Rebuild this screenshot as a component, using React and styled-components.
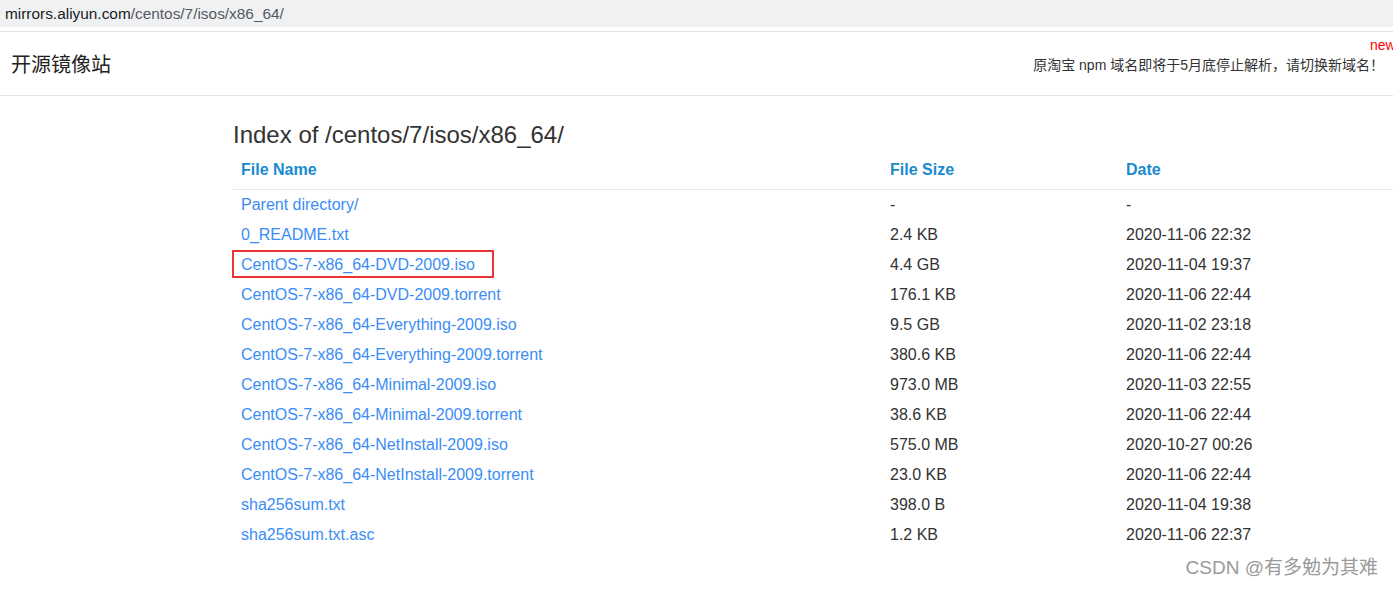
import React from 'react';
import styled, { createGlobalStyle } from 'styled-components';

const GlobalStyle = createGlobalStyle`
  body {
    margin: 0;
    background: #fff;
    font-family: "Liberation Sans", Arial, "Noto Sans CJK SC", sans-serif;
    overflow: hidden;
  }
`;

const Page = styled.div`
  width: 1393px;
  height: 589px;
  position: relative;
  overflow: hidden;
`;

const AddressBar = styled.div`
  height: 27px;
  background: #f0f1f3;
  display: flex;
  align-items: center;
  padding-left: 5px;
  font-size: 15.4px;
  color: #202124;
`;

const Path = styled.span`
  color: #55595e;
`;

const Header = styled.div`
  margin-top: 4px;
  height: 63px;
  border-top: 1px solid #e2e2e2;
  border-bottom: 1px solid #e2e2e2;
  display: flex;
  align-items: center;
  justify-content: space-between;
  padding: 0 9px 0 11px;
`;

const Brand = styled.div`
  font-size: 20px;
  color: #222;
  font-family: "Noto Sans CJK SC", "Liberation Sans", sans-serif;
  font-weight: 400;
`;

const Notice = styled.div`
  position: relative;
  font-size: 14px;
  color: #333;
  font-family: "Liberation Sans", "Noto Sans CJK SC", sans-serif;
`;

const NewBadge = styled.span`
  position: absolute;
  top: -17px;
  left: calc(100% - 14px);
  color: #f00;
  font-size: 14px;
  white-space: nowrap;
`;

const Main = styled.div`
  padding-left: 233px;
`;

const Title = styled.h1`
  margin: 23px 0 0;
  font-size: 24px;
  font-weight: 400;
  color: #333;
  line-height: 32px;
`;

const Table = styled.table`
  border-collapse: collapse;
  table-layout: fixed;
  width: 1200px;
  font-size: 16px;
`;

const Th = styled.th`
  text-align: left;
  font-weight: 700;
  color: #1a8ad0;
  padding: 0 8px;
  height: 38px;
  vertical-align: middle;
  border-bottom: 1px solid #e6e6e6;
`;

const Td = styled.td`
  padding: 0 8px;
  height: 30px;
  color: #333;
  vertical-align: middle;
  white-space: nowrap;
`;

const Link = styled.a`
  color: #3b8df5;
  text-decoration: none;
  display: inline-block;
  position: relative;
`;

const Highlight = styled.span`
  position: absolute;
  left: -9px;
  top: -6px;
  width: 262px;
  height: 28px;
  border: 2px solid #ee3333;
  box-sizing: border-box;
  pointer-events: none;
`;

const Watermark = styled.div`
  position: absolute;
  right: 15px;
  bottom: 10px;
  color: #9a9a9a;
  font-size: 19px;
  font-family: "Liberation Sans", "Noto Sans CJK SC", sans-serif;
`;

const files = [
  ['Parent directory/', '-', '-'],
  ['0_README.txt', '2.4 KB', '2020-11-06 22:32'],
  ['CentOS-7-x86_64-DVD-2009.iso', '4.4 GB', '2020-11-04 19:37', true],
  ['CentOS-7-x86_64-DVD-2009.torrent', '176.1 KB', '2020-11-06 22:44'],
  ['CentOS-7-x86_64-Everything-2009.iso', '9.5 GB', '2020-11-02 23:18'],
  ['CentOS-7-x86_64-Everything-2009.torrent', '380.6 KB', '2020-11-06 22:44'],
  ['CentOS-7-x86_64-Minimal-2009.iso', '973.0 MB', '2020-11-03 22:55'],
  ['CentOS-7-x86_64-Minimal-2009.torrent', '38.6 KB', '2020-11-06 22:44'],
  ['CentOS-7-x86_64-NetInstall-2009.iso', '575.0 MB', '2020-10-27 00:26'],
  ['CentOS-7-x86_64-NetInstall-2009.torrent', '23.0 KB', '2020-11-06 22:44'],
  ['sha256sum.txt', '398.0 B', '2020-11-04 19:38'],
  ['sha256sum.txt.asc', '1.2 KB', '2020-11-06 22:37'],
];

const App = () => (
  <Page>
    <GlobalStyle />
    <AddressBar>
      mirrors.aliyun.com<Path>/centos/7/isos/x86_64/</Path>
    </AddressBar>
    <Header>
      <Brand>开源镜像站</Brand>
      <Notice>
        原淘宝 npm 域名即将于5月底停止解析，请切换新域名！
        <NewBadge>new</NewBadge>
      </Notice>
    </Header>
    <Main>
      <Title>Index of /centos/7/isos/x86_64/</Title>
      <Table>
        <colgroup>
          <col style={{ width: 649 }} />
          <col style={{ width: 236 }} />
          <col />
        </colgroup>
        <thead>
          <tr>
            <Th>File Name</Th>
            <Th>File Size</Th>
            <Th>Date</Th>
          </tr>
        </thead>
        <tbody>
          {files.map(([name, size, date, marked]) => (
            <tr key={name}>
              <Td>
                <Link href="#">
                  {name}
                  {marked && <Highlight />}
                </Link>
              </Td>
              <Td>{size}</Td>
              <Td>{date}</Td>
            </tr>
          ))}
        </tbody>
      </Table>
    </Main>
    <Watermark>CSDN @有多勉为其难</Watermark>
  </Page>
);

export default App;
